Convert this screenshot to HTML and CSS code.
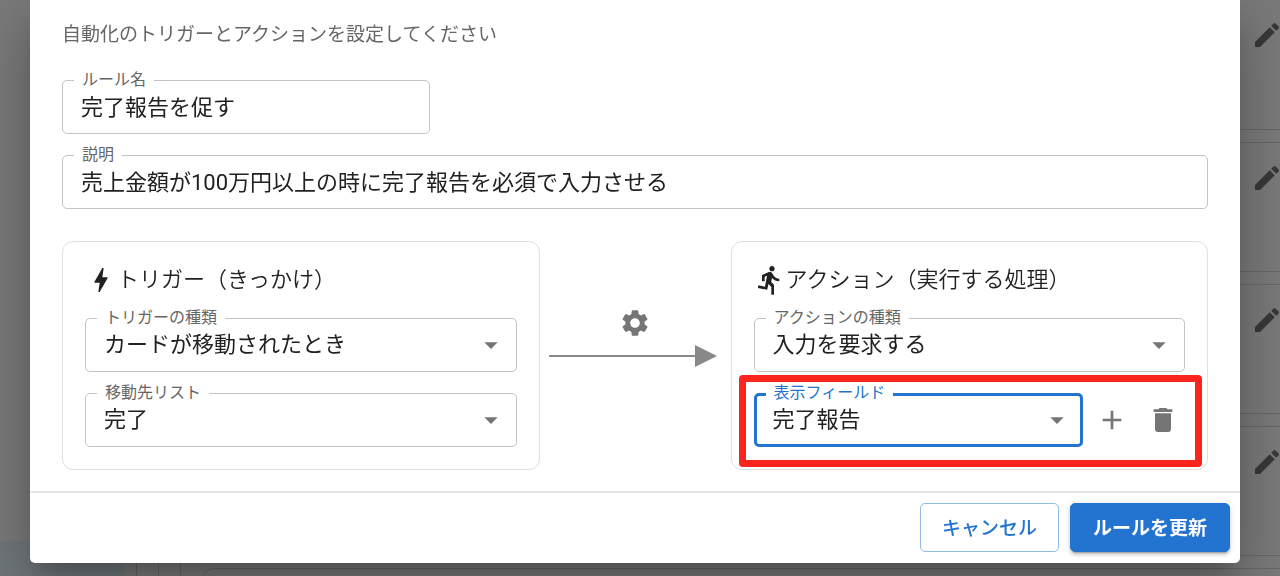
FILE: index.html
```
<!DOCTYPE html>
<html lang="ja">
<head>
  <meta charset="UTF-8" />
  <meta name="viewport" content="width=device-width, initial-scale=1.0" />
  <title>自動化ルールの編集</title>
  <link rel="stylesheet" href="styles.css">
</head>
<body>
  <!-- dimmed page behind the dialog -->
  <div class="page" aria-hidden="true">
    <div class="sidebar"><div class="sidebar-footer"></div></div>
    <div class="panel"><div class="panel"><div class="panel">
      <div class="rules">
        <div class="rule"><svg class="icon" viewBox="0 0 24 24"><path d="M3 17.25V21h3.75L17.81 9.94l-3.75-3.75L3 17.25zM20.71 7.04c.39-.39.39-1.02 0-1.41l-2.34-2.34a.996.996 0 0 0-1.41 0l-1.83 1.83 3.75 3.75 1.83-1.83z"/></svg></div>
        <div class="rule"><svg class="icon" viewBox="0 0 24 24"><path d="M3 17.25V21h3.75L17.81 9.94l-3.75-3.75L3 17.25zM20.71 7.04c.39-.39.39-1.02 0-1.41l-2.34-2.34a.996.996 0 0 0-1.41 0l-1.83 1.83 3.75 3.75 1.83-1.83z"/></svg></div>
        <div class="rule"><svg class="icon" viewBox="0 0 24 24"><path d="M3 17.25V21h3.75L17.81 9.94l-3.75-3.75L3 17.25zM20.71 7.04c.39-.39.39-1.02 0-1.41l-2.34-2.34a.996.996 0 0 0-1.41 0l-1.83 1.83 3.75 3.75 1.83-1.83z"/></svg></div>
        <div class="rule"><svg class="icon" viewBox="0 0 24 24"><path d="M3 17.25V21h3.75L17.81 9.94l-3.75-3.75L3 17.25zM20.71 7.04c.39-.39.39-1.02 0-1.41l-2.34-2.34a.996.996 0 0 0-1.41 0l-1.83 1.83 3.75 3.75 1.83-1.83z"/></svg></div>
        <div class="rule"></div>
      </div>
    </div></div></div>
  </div>

  <form class="dialog" role="dialog" aria-labelledby="lead">
    <div class="content">
      <p class="lead" id="lead">自動化のトリガーとアクションを設定してください</p>

      <div class="field field-name">
        <input type="text" id="name" value="完了報告を促す">
        <label for="name">ルール名</label>
      </div>

      <div class="field">
        <input type="text" id="description" value="売上金額が100万円以上の時に完了報告を必須で入力させる">
        <label for="description">説明</label>
      </div>

      <div class="flow">
        <section class="card">
          <h2>
            <svg class="icon" viewBox="0 0 24 24"><path d="M11 21h-1l1-7H7.5c-.88 0-.33-.75-.31-.78C8.48 10.94 10.42 7.54 13.01 3h1l-1 7h3.51c.4 0 .62.19.4.66C12.97 17.55 11 21 11 21z"/></svg>
            トリガー（きっかけ）
          </h2>
          <div class="field">
            <select id="trigger"><option>カードが移動されたとき</option></select>
            <label for="trigger">トリガーの種類</label>
            <svg class="arrow" viewBox="0 0 24 24"><path d="M7 10l5 5 5-5z"/></svg>
          </div>
          <div class="field">
            <select id="list"><option>完了</option></select>
            <label for="list">移動先リスト</label>
            <svg class="arrow" viewBox="0 0 24 24"><path d="M7 10l5 5 5-5z"/></svg>
          </div>
        </section>

        <div class="connector">
          <svg class="icon" viewBox="0 0 24 24"><path d="M19.14 12.94c.04-.3.06-.61.06-.94 0-.32-.02-.64-.07-.94l2.03-1.58c.18-.14.23-.41.12-.61l-1.92-3.32c-.12-.22-.37-.29-.59-.22l-2.39.96c-.5-.38-1.03-.7-1.62-.94l-.36-2.54c-.04-.24-.24-.41-.48-.41h-3.84c-.24 0-.43.17-.47.41l-.36 2.54c-.59.24-1.13.57-1.62.94l-2.39-.96c-.22-.08-.47 0-.59.22L2.74 8.87c-.12.21-.08.47.12.61l2.03 1.58c-.05.3-.09.63-.09.94s.02.64.07.94l-2.03 1.58c-.18.14-.23.41-.12.61l1.92 3.32c.12.22.37.29.59.22l2.39-.96c.5.38 1.03.7 1.62.94l.36 2.54c.05.24.24.41.48.41h3.84c.24 0 .44-.17.47-.41l.36-2.54c.59-.24 1.13-.56 1.62-.94l2.39.96c.22.08.47 0 .59-.22l1.92-3.32c.12-.22.07-.47-.12-.61l-2.01-1.58zM12 15.6c-1.98 0-3.6-1.62-3.6-3.6s1.62-3.6 3.6-3.6 3.6 1.62 3.6 3.6-1.62 3.6-3.6 3.6z"/></svg>
          <div class="line"></div>
        </div>

        <section class="card">
          <h2>
            <svg class="icon" viewBox="0 0 24 24"><path d="M13.49 5.48c1.1 0 2-.9 2-2s-.9-2-2-2-2 .9-2 2 .9 2 2 2zm-3.6 13.9l1-4.4 2.1 2v6h2v-7.5l-2.1-2 .6-3c1.3 1.5 3.3 2.5 5.5 2.5v-2c-1.9 0-3.5-1-4.3-2.4l-1-1.6c-.4-.6-1-1-1.7-1-.3 0-.5.1-.8.1l-5.2 2.2v4.7h2v-3.4l1.8-.7-1.6 8.1-4.9-1-.4 2 7 1.4z"/></svg>
            アクション（実行する処理）
          </h2>
          <div class="field">
            <select id="action"><option>入力を要求する</option></select>
            <label for="action">アクションの種類</label>
            <svg class="arrow" viewBox="0 0 24 24"><path d="M7 10l5 5 5-5z"/></svg>
          </div>
          <div class="field-row">
            <div class="field active">
              <select id="target"><option>完了報告</option></select>
              <label for="target">表示フィールド</label>
              <svg class="arrow" viewBox="0 0 24 24"><path d="M7 10l5 5 5-5z"/></svg>
            </div>
            <button type="button" class="icon-button" aria-label="追加">
              <svg class="icon" viewBox="0 0 24 24"><path d="M19 13h-6v6h-2v-6H5v-2h6V5h2v6h6v2z"/></svg>
            </button>
            <button type="button" class="icon-button" aria-label="削除">
              <svg class="icon" viewBox="0 0 24 24"><path d="M6 19c0 1.1.9 2 2 2h8c1.1 0 2-.9 2-2V7H6v12zM19 4h-3.5l-1-1h-5l-1 1H5v2h14V4z"/></svg>
            </button>
            <div class="highlight"></div>
          </div>
        </section>
      </div>
    </div>

    <div class="actions">
      <button type="button" class="button">キャンセル</button>
      <button type="submit" class="button primary">ルールを更新</button>
    </div>
  </form>
</body>
</html>
```

FILE: styles.css
```
* {
  box-sizing: border-box;
}
body {
  margin: 0;
  min-height: 100vh;
  overflow: hidden;
  background: #7a7a7a;
  color: #212121;
  font-family: Roboto, "Noto Sans CJK JP", sans-serif;
}
.icon {
  width: 32px;
  height: 32px;
  flex: none;
  fill: currentColor;
}

/* page behind */
.page {
  position: fixed;
  inset: 0;
  display: flex;
  overflow: hidden;
}
.sidebar {
  width: 124px;
  display: flex;
  flex-direction: column;
  justify-content: flex-end;
}
.sidebar-footer {
  height: 35px;
  background: #70777b;
}
.panel {
  flex: 1;
  margin-left: 12px;
  border-left: 1px solid #676767;
}
.panel .panel {
  height: 100%;
  margin-left: 21px;
}
.rules {
  display: flex;
  flex-direction: column;
  gap: 12px;
  margin: 0 -12px 0 22px;
}
.rule {
  display: flex;
  justify-content: flex-end;
  height: 130px;
  padding: 19px 8px;
  border: 1px solid #676767;
  border-radius: 10px;
  color: #383838;
}
.rule:first-child {
  border-top: 0;
}

/* dialog */
.dialog {
  position: relative;
  margin: 0 40px 13px 30px;
  background: #fff;
  border-radius: 0 0 5px 5px;
  box-shadow: 0 15px 20px -9px rgba(0, 0, 0, .2), 0 32px 51px 4px rgba(0, 0, 0, .14), 0 12px 61px 11px rgba(0, 0, 0, .12);
}
.content {
  display: flex;
  flex-direction: column;
  gap: 21px;
  padding: 21px 32px;
}
.lead {
  margin: 0 0 10px;
  font-size: 19px;
  line-height: 28px;
  color: #666;
}
.field {
  position: relative;
  height: 54px;
}
.field-name {
  width: 368px;
  max-width: 100%;
}
.field input,
.field select {
  width: 100%;
  height: 100%;
  margin: 0;
  padding: 0 18px 2px;
  border: 1px solid #c4c4c4;
  border-radius: 5px;
  outline: none;
  appearance: none;
  background: #fff;
  color: inherit;
  font: inherit;
  font-size: 22px;
}
.field input {
  padding-bottom: 4px;
}
.field label {
  position: absolute;
  top: -12px;
  left: 12px;
  padding: 0 8px;
  background: #fff;
  color: #666;
  font-size: 16px;
  line-height: 24px;
}
.arrow {
  position: absolute;
  top: 11px;
  right: 10px;
  width: 32px;
  height: 32px;
  fill: #757575;
  pointer-events: none;
}
.field.active select {
  padding: 0 16px 2px;
  border: 3px solid #2374d0;
}
.field.active label {
  color: #2374d0;
}

/* trigger -> action */
.flow {
  display: grid;
  grid-template-columns: 1fr 191px 1fr;
  margin-top: 11px;
}
.card {
  display: flex;
  flex-direction: column;
  gap: 21px;
  padding: 22px;
  border: 1px solid #e0e0e0;
  border-radius: 11px;
}
.card h2 {
  display: flex;
  align-items: center;
  margin: 0;
  font-size: 22px;
  font-weight: 350;
  line-height: 32px;
  padding-bottom: 1px;
}
.connector {
  display: grid;
  grid-template-rows: 1fr 22px 1fr;
  row-gap: 6px;
  justify-items: center;
  align-items: end;
  color: #757575;
}
.line {
  display: flex;
  align-items: center;
  justify-self: stretch;
  margin: 0 14px 0 9px;
}
.line::before {
  content: "";
  flex: 1;
  height: 2px;
  background: #888;
}
.line::after {
  content: "";
  border: 11px solid transparent;
  border-left: 22px solid #888;
  border-right: 0;
}
.field-row {
  position: relative;
  display: flex;
  align-items: center;
  gap: 7px;
}
.field-row .field {
  flex: 1;
}
.icon-button {
  display: flex;
  align-items: center;
  justify-content: center;
  width: 44px;
  height: 44px;
  padding: 0;
  border: 0;
  border-radius: 50%;
  background: none;
  color: #757575;
}
.highlight {
  position: absolute;
  inset: -18px -17px -20px -15px;
  border: 7px solid #fa251c;
  border-radius: 4px;
  pointer-events: none;
}

.actions {
  display: flex;
  justify-content: flex-end;
  gap: 11px;
  padding: 10px 10px 11px;
  border-top: 2px solid #e6e6e6;
}
.button {
  height: 49px;
  padding: 0 21px 2px;
  border: 1px solid #91bae7;
  border-radius: 5px;
  background: #fff;
  color: #2374d0;
  font: inherit;
  font-size: 19px;
  font-weight: 500;
}
.primary {
  padding: 0 22px 2px;
  border-color: #2374d0;
  background: #2374d0;
  color: #fff;
  font-weight: 700;
  box-shadow: 0 4px 1px -3px rgba(0, 0, 0, .2), 0 3px 3px 0 rgba(0, 0, 0, .14), 0 1px 7px 0 rgba(0, 0, 0, .12);
}
```
